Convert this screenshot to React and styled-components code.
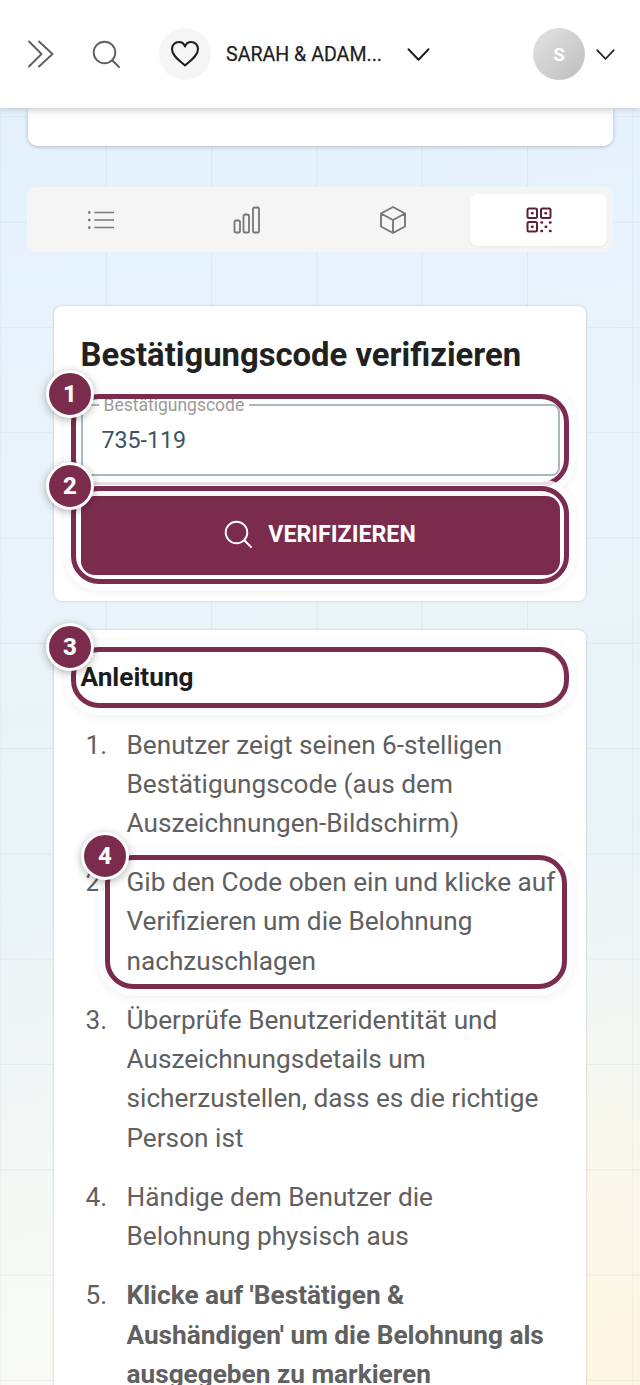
import React from "react";
import styled, { createGlobalStyle } from "styled-components";

const wine = "#7b2c4c";

const Global = createGlobalStyle`
  html, body { margin: 0; padding: 0; height: 1385px; overflow: hidden; }
  body { font-family: Roboto, "Liberation Sans", sans-serif; color: #222; }
  * { box-sizing: border-box; }
`;

const Page = styled.div`
  width: 640px;
  height: 1385px;
  overflow: hidden;
  position: relative;
  background-color: #e6f1fb;
  background-image:
    linear-gradient(rgba(170, 190, 205, 0.2) 1px, transparent 1px),
    linear-gradient(90deg, rgba(170, 190, 205, 0.2) 1px, transparent 1px),
    radial-gradient(circle at 100% 100%, #fdf5e2 0, rgba(253, 245, 226, 0) 420px),
    linear-gradient(172deg, #e2eff9 0%, #e8f3fd 25%, #ebf4f5 62%, #f8faf6 90%, #fbfbf8 100%);
  background-size: 105.3px 105.3px, 105.3px 105.3px, 100% 100%, 100% 100%;
  background-position: 0 11px, 0.5px 0, 0 0, 0 0;
`;

const Header = styled.header`
  height: 108px;
  background: #fff;
  display: flex;
  align-items: center;
  padding: 0 25px 0 27px;
  box-shadow: 0 1px 6px rgba(0, 0, 0, 0.18);
  position: relative;
  z-index: 5;
`;

const IconSlot = styled.span`
  display: flex;
  color: ${(p) => p.$color || "#5f5f5f"};
  margin-left: ${(p) => p.$ml || 0}px;
  margin-right: ${(p) => p.$mr || 0}px;
`;

const HeartCircle = styled.span`
  width: 52px;
  height: 52px;
  border-radius: 50%;
  background: #f5f5f5;
  display: flex;
  align-items: center;
  justify-content: center;
  margin-left: 39px;
`;

const OrgName = styled.span`
  font-size: 19.6px;
  font-weight: 400;
  -webkit-text-stroke: 0.25px #1f1f1f;
  color: #1f1f1f;
  margin-left: 15px;
  width: 181px;
  white-space: nowrap;
`;

const Avatar = styled.span`
  width: 52px;
  height: 52px;
  border-radius: 50%;
  background: linear-gradient(135deg, #e4e4e4, #bdbdbd);
  color: #fff;
  font-size: 19px;
  font-weight: 700;
  display: flex;
  align-items: center;
  justify-content: center;
  margin-left: auto;
`;

const Main = styled.main`
  padding: 0 27px 0 28px;
`;

const CutCard = styled.div`
  height: 38px;
  background: linear-gradient(#f4f4f4 0, #fff 14px);
  border-radius: 0 0 10px 10px;
  box-shadow: 0 1px 4px rgba(0, 0, 0, 0.22);
`;

const Tabs = styled.nav`
  margin: 41px 0 0 -1px;
  height: 65px;
  width: 586px;
  background: #f5f5f5;
  border-radius: 10px;
  padding: 7px 6px 6px 5px;
  display: grid;
  grid-template-columns: repeat(4, 1fr);
  gap: 9px;
`;

const Tab = styled.span`
  display: flex;
  align-items: center;
  justify-content: center;
  border-radius: 8px;
  background: ${(p) => (p.$active ? "#fff" : "transparent")};
  color: ${(p) => (p.$active ? "#5e2039" : "#777")};
  box-shadow: ${(p) => (p.$active ? "0 1px 3px rgba(0,0,0,.06)" : "none")};
`;

const Card = styled.section`
  position: relative;
  width: 532px;
  margin: ${(p) => p.$mt}px 0 0 26px;
  background: #fff;
  border-radius: 8px;
  padding: ${(p) => p.$pad};
  box-shadow: 0 0 3px rgba(0, 0, 0, 0.18);
`;

const Title = styled.h1`
  margin: 0;
  font-size: 32.8px;
  line-height: 40px;
  font-weight: 700;
  color: #212121;
  white-space: nowrap;
`;

const Field = styled.fieldset`
  margin: 22px 0 0;
  padding: 0 0 0 14px;
  width: 479px;
  height: 79px;
  border: 2px solid #a9b9bd;
  border-radius: 8px;
  min-inline-size: 0;
`;

const FieldLegend = styled.legend`
  padding: 0 5px;
  font-size: 17.5px;
  line-height: 16px;
  color: #9a9a9a;
  margin-left: 2px;
`;

const FieldValue = styled.div`
  font-size: 23.2px;
  line-height: 30px;
  color: #3d5460;
  margin: 12px 0 0 5px;
`;

const VerifyButton = styled.button`
  margin-top: 20px;
  width: 479px;
  height: 79px;
  border: 0;
  border-radius: 14px;
  padding: 0 0 4px;
  background: ${wine};
  color: #fff;
  font-family: inherit;
  font-size: 23.2px;
  font-weight: 700;
  display: flex;
  align-items: center;
  justify-content: center;
  gap: 16px;
`;

const Subtitle = styled.h2`
  margin: 0;
  font-size: 26.2px;
  line-height: 34px;
  font-weight: 700;
  color: #1c1c1c;
`;

const Steps = styled.ol`
  margin: 31.5px 0 0;
  padding: 0 0 0 5px;
  list-style: none;
  counter-reset: step;
  font-size: 26.2px;
  line-height: 39.3px;
  color: #606060;
  strong { font-weight: 700; }
`;

const Step = styled.li`
  counter-increment: step;
  display: grid;
  grid-template-columns: 41px 1fr;
  margin-bottom: 19.8px;
  &::before { content: counter(step) "."; }
`;

const Ring = styled.span`
  position: absolute;
  left: ${(p) => p.$l}px;
  top: ${(p) => p.$t}px;
  width: ${(p) => p.$w}px;
  height: ${(p) => p.$h}px;
  border: 5px solid ${wine};
  border-radius: 28px;
  box-shadow: 0 0 0 1px #fff, 0 0 0 7px rgba(255,255,255,.85), 0 2px 10px 6px rgba(0,0,0,.07);
  pointer-events: none;
`;

const Badge = styled.span`
  position: absolute;
  left: ${(p) => p.$l}px;
  top: ${(p) => p.$t}px;
  width: 48px;
  height: 48px;
  border-radius: 50%;
  background: ${wine};
  border: 3px solid #fff;
  color: #fff;
  font-size: 24px;
  font-weight: 800;
  display: flex;
  align-items: center;
  justify-content: center;
  box-shadow: 0 2px 8px rgba(0, 0, 0, 0.3);
  z-index: 2;
`;

const Svg = ({ size = 32, w = 1.6, children, vb = 32 }) => (
  <svg width={size} height={size} viewBox={`0 0 ${vb} ${vb}`} fill="none" stroke="currentColor" strokeWidth={w} strokeLinecap="round" strokeLinejoin="round">{children}</svg>
);

const SearchIcon = ({ size = 28 }) => (
  <Svg size={size} w={1.9} vb={28}><circle cx="12.5" cy="12.5" r="10.8" /><path d="M20.5 20.5 L27 27" /></Svg>
);

const Chevron = ({ size, w = 2 }) => (
  <Svg size={size} w={w} vb={24}><path d="M1.5 6.5 L12 17.5 L22.5 6.5" /></Svg>
);

export default function App() {
  return (
    <Page>
      <Global />
      <Header>
        <IconSlot>
          <Svg size={28} w={1.9} vb={28}><path d="M2 1.5 L14.5 14 L2 26.5 M12 1.5 L25.5 14 L12 26.5" /></Svg>
        </IconSlot>
        <IconSlot $ml={37}><SearchIcon /></IconSlot>
        <HeartCircle>
          <IconSlot $color="#1f1f1f">
            <Svg size={30} w={2.1} vb={30}><path d="M15 26.5 C11 22.5 2 17.5 2 10 C2 6 5 3 9 3 C11.5 3 14 4.5 15 7.5 C16 4.5 18.5 3 21 3 C25 3 28 6 28 10 C28 17.5 19 22.5 15 26.5 Z" /></Svg>
          </IconSlot>
        </HeartCircle>
        <OrgName>SARAH &amp; ADAM...</OrgName>
        <IconSlot $color="#1f1f1f"><Chevron size={23} /></IconSlot>
        <Avatar>S</Avatar>
        <IconSlot $ml={11} $color="#1f1f1f"><Chevron size={19} /></IconSlot>
      </Header>
      <Main>
        <CutCard />
        <Tabs>
          <Tab>
            <Svg size={26} w={1.7} vb={26}><path d="M7 5.5 H25.5 M7 13 H25.5 M7 20.5 H25.5" /><path d="M1 5.5 H1.5 M1 13 H1.5 M1 20.5 H1.5" strokeWidth="2.4" /></Svg>
          </Tab>
          <Tab>
            <Svg size={28} w={1.8} vb={28}>
              <rect x="1.5" y="14.5" width="5.5" height="12" rx="1.6" />
              <rect x="10.5" y="8.5" width="5.5" height="18" rx="1.6" />
              <rect x="20" y="1.5" width="6" height="25" rx="1.6" />
            </Svg>
          </Tab>
          <Tab>
            <Svg size={30} w={1.9} vb={30}><path d="M15 2 L27 8.5 V21.5 L15 28 L3 21.5 V8.5 Z M3 8.5 L15 15 L27 8.5 M15 15 V28" /></Svg>
          </Tab>
          <Tab $active>
            <Svg size={26} w={2} vb={26}>
              <rect x="1.5" y="1.5" width="9.5" height="9.5" rx="1.5" />
              <rect x="15" y="1.5" width="9.5" height="9.5" rx="1.5" />
              <rect x="1.5" y="15" width="9.5" height="9.5" rx="1.5" />
              <path d="M6 6.2 H6.5 M19.5 6.2 H20 M6 19.7 H6.5" strokeWidth="2.6" />
              <path d="M15.5 15.5 H16 M24 15.5 H24.5 M19.7 19.7 H20.2 M15.5 24 H16 M24 24 H24.5" strokeWidth="2.6" />
            </Svg>
          </Tab>
        </Tabs>
        <Card $mt={54} $pad="29px 26px 26px 26.5px">
          <Title>Bestätigungscode verifizieren</Title>
          <Field>
            <FieldLegend>Bestätigungscode</FieldLegend>
            <FieldValue>735-119</FieldValue>
          </Field>
          <VerifyButton>
            <SearchIcon />
            VERIFIZIEREN
          </VerifyButton>
          <Ring $l={17} $t={88} $w={498} $h={93} />
          <Ring $l={17} $t={180} $w={498} $h={98} />
          <Badge $l={-8} $t={64}>1</Badge>
          <Badge $l={-8} $t={156}>2</Badge>
        </Card>
        <Card $mt={29} $pad="30px 26px 0 26.5px">
          <Subtitle>Anleitung</Subtitle>
          <Steps>
            <Step><span>Benutzer zeigt seinen 6-stelligen Bestätigungscode (aus dem Auszeichnungen-Bildschirm)</span></Step>
            <Step><span>Gib den Code oben ein und klicke auf Verifizieren um die Belohnung nachzuschlagen</span></Step>
            <Step><span>Überprüfe Benutzeridentität und Auszeichnungsdetails um sicherzustellen, dass es die richtige Person ist</span></Step>
            <Step><span>Händige dem Benutzer die Belohnung physisch aus</span></Step>
            <Step><strong>Klicke auf 'Bestätigen &amp; Aushändigen' um die Belohnung als ausgegeben zu markieren</strong></Step>
          </Steps>
          <Ring $l={17} $t={17} $w={498} $h={61} />
          <Ring $l={51} $t={225} $w={462} $h={134} />
          <Badge $l={-8} $t={-7}>3</Badge>
          <Badge $l={27} $t={202}>4</Badge>
        </Card>
      </Main>
    </Page>
  );
}
